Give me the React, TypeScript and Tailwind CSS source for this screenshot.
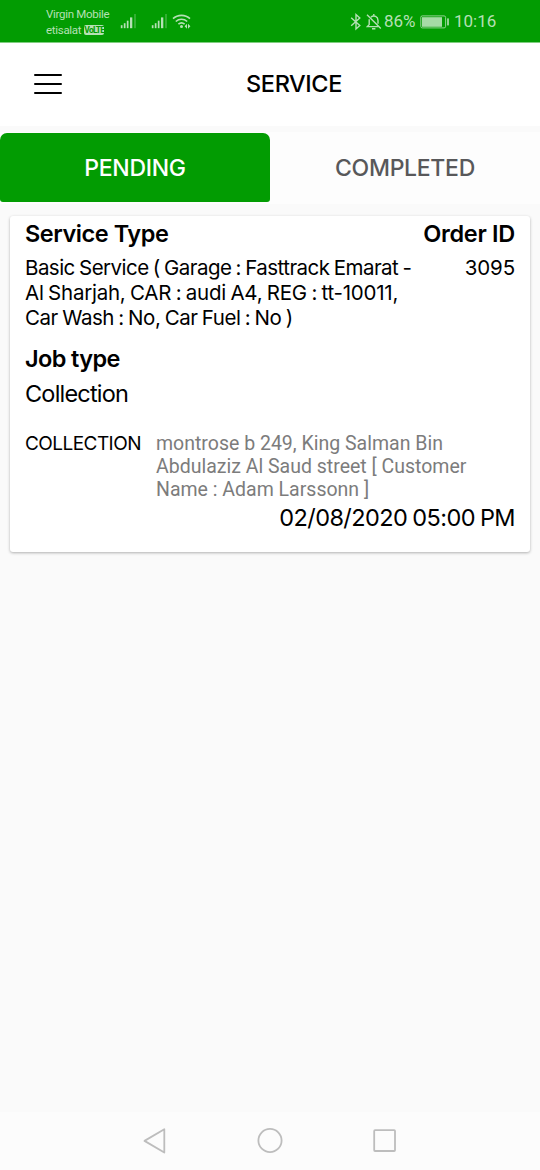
function SignalIcon() {
  return (
    <svg width="16" height="16" viewBox="0 0 16 16" fill="#b5e0b5">
      <rect x="0.8" y="12.2" width="1.7" height="3" />
      <rect x="3.8" y="10.2" width="1.7" height="5" />
      <rect x="6.8" y="7.7" width="1.7" height="7.5" />
      <rect x="10" y="4.4" width="2.3" height="10.8" />
      <rect x="14.2" y="1" width="1.6" height="14.2" opacity="0.35" />
    </svg>
  );
}

function WifiIcon() {
  return (
    <svg width="20" height="17" viewBox="0 0 20 17" fill="none" stroke="#b5e0b5" strokeWidth="1.6">
      <path d="M1 5.7c4.7-4.5 12.3-4.5 17 0" />
      <path d="M3.8 8.5c3.2-3 8.2-3 11.4 0" />
      <path d="M6.4 11.2c1.8-1.6 4.4-1.6 6.2 0" />
      <circle cx="9.5" cy="13.6" r="1.5" fill="#b5e0b5" stroke="none" />
      <path d="M15 10.8v5l-2.4-2.5zM16 10.8v5l2.4-2.5z" fill="#b5e0b5" stroke="none" />
    </svg>
  );
}

function BluetoothIcon() {
  return (
    <svg width="12" height="18" viewBox="0 0 12 18" fill="none" stroke="#b5e0b5" strokeWidth="1.4">
      <path d="M1.2 4.8l8.6 7.8L6 16V1.6l3.8 3.4-8.6 7.8" />
    </svg>
  );
}

function BellOffIcon() {
  return (
    <svg width="16" height="18" viewBox="0 0 16 18" fill="none" stroke="#b5e0b5" strokeWidth="1.4">
      <path d="M4.8 4.2C8 1.6 12 3.8 12 7.4v3.4M3.2 6.2v5.4L1.4 13.6h11" />
      <path d="M6 15.8h3.4M7.8 1v1.8M1 1.8l13.8 13.6" />
    </svg>
  );
}

function BatteryIcon() {
  return (
    <svg width="30" height="14" viewBox="0 0 30 14" fill="none">
      <rect x="0.8" y="0.9" width="24.8" height="12" rx="1.5" stroke="#b5e0b5" strokeWidth="1" opacity="0.8" />
      <rect x="2" y="2.2" width="20" height="9.6" fill="#a6dba6" />
      <rect x="27.2" y="3.4" width="1.6" height="7" fill="#b5e0b5" />
    </svg>
  );
}

function StatusBar() {
  return (
    <div className="flex h-[42px] items-start justify-between bg-[#029c02] font-[Roboto,sans-serif] text-[#b5e0b5]">
      <div className="flex pl-[46px]">
        <div className="w-[74px] pt-[6px] text-[11.5px] leading-[16px] tracking-[-0.3px]">
          <div className="whitespace-nowrap">Virgin Mobile</div>
          <div className="flex items-center gap-[3px]">
            etisalat
            <span className="flex h-[10px] w-[20px] items-center justify-center rounded-[2px] bg-[#b5e0b5] text-[8.5px] leading-none font-bold tracking-[-0.8px] text-[#029c02]">
              VoLTE
            </span>
          </div>
        </div>
        <div className="flex pt-[13px]">
          <SignalIcon />
          <div className="ml-[15px]">
            <SignalIcon />
          </div>
          <div className="ml-[5px]">
            <WifiIcon />
          </div>
        </div>
      </div>
      <div className="flex h-[43px] items-center pr-[44px] text-[17px]">
        <BluetoothIcon />
        <div className="ml-[4px]">
          <BellOffIcon />
        </div>
        <span className="ml-[2px] w-[32px] whitespace-nowrap">86%</span>
        <div className="ml-[4px]">
          <BatteryIcon />
        </div>
        <span className="ml-[4px] w-[42px] whitespace-nowrap">10:16</span>
      </div>
    </div>
  );
}

function Header() {
  return (
    <header className="flex h-[84px] items-center border-t border-[#80cd80] bg-white pr-[14px] pl-[34px]">
      <button className="flex w-7 flex-col gap-[7px] pb-[1px]" aria-label="Menu">
        <span className="h-[2px] w-full rounded-full bg-black" />
        <span className="h-[2px] w-full rounded-full bg-black" />
        <span className="h-[2px] w-full rounded-full bg-black" />
      </button>
      <h1 className="flex-1 pb-[2px] text-center text-[23.5px] font-medium tracking-[-0.4px]">SERVICE</h1>
    </header>
  );
}

function Tabs() {
  return (
    <div className="mt-[6px] flex h-[72px] items-start bg-[#fdfdfd] text-[23px] font-medium">
      <button className="mt-[1px] h-[69px] flex-1 rounded-t-[7px] rounded-b-[3px] bg-[#029c02] pt-[2px] tracking-[-0.3px] text-white">
        PENDING
      </button>
      <button className="mt-[1px] h-[69px] flex-1 pt-[2px] tracking-[-0.3px] text-[#58585a]">COMPLETED</button>
    </div>
  );
}

function ServiceCard() {
  return (
    <section className="mx-[10px] mt-[12px] h-[336px] rounded-[3px] bg-white px-[15px] pt-[3px] shadow-[0_1px_3px_rgba(0,0,0,0.3)]">
      <div className="flex justify-between text-[23.5px] leading-[30px] font-semibold tracking-[-0.45px]">
        <h2>Service Type</h2>
        <h2 className="tracking-[-0.3px]">Order ID</h2>
      </div>
      <div className="mt-[6px] flex justify-between text-[20.5px] leading-[25px] tracking-[-0.53px]">
        <p className="whitespace-nowrap [word-spacing:-1px]">
          Basic Service ( Garage : Fasttrack Emarat -
          <br />
          <span className="tracking-[-0.25px]">Al Sharjah, CAR : audi A4, REG : tt-10011,</span>
          <br />
          <span className="tracking-[-0.45px]">Car Wash : No, Car Fuel : No )</span>
        </p>
        <span className="tracking-[-0.1px]">3095</span>
      </div>
      <h2 className="mt-[14px] text-[23.5px] leading-[30px] font-semibold tracking-[-0.6px]">Job type</h2>
      <p className="mt-[5px] text-[23.5px] leading-[30px] tracking-[-0.8px]">Collection</p>
      <div className="mt-[23px] flex">
        <span className="w-[131px] text-[19px] leading-[23px] tracking-[-0.55px]">COLLECTION</span>
        <p className="font-[Roboto,sans-serif] text-[19.5px] leading-[23px] whitespace-nowrap text-[#7c7c7c]">
          montrose b 249, King Salman Bin
          <br />
          Abdulaziz Al Saud street [ Customer
          <br />
          Name : Adam Larssonn ]
        </p>
      </div>
      <p className="mt-[2px] text-right text-[23.5px] leading-[30px] tracking-[-0.58px] [word-spacing:-1px]">
        02/08/2020 05:00 PM
      </p>
    </section>
  );
}

function NavBar() {
  return (
    <nav className="flex h-[58px] items-center justify-center gap-[87px] bg-[#fcfcfc]">
      <svg width="28" height="28" viewBox="0 0 28 28" fill="none" stroke="#bdbdbd" strokeWidth="1.8" strokeLinejoin="round">
        <path d="M23.3 2.3v23.2L3.5 13.9z" />
      </svg>
      <svg width="28" height="28" viewBox="0 0 28 28" fill="none" stroke="#bdbdbd" strokeWidth="1.8">
        <circle cx="14" cy="13.5" r="11.6" />
      </svg>
      <svg width="28" height="28" viewBox="0 0 28 28" fill="none" stroke="#bdbdbd" strokeWidth="1.8">
        <rect x="3.2" y="3.2" width="20.8" height="20.8" rx="0.8" />
      </svg>
    </nav>
  );
}

export default function App() {
  return (
    <div className="flex h-[1170px] w-[540px] flex-col overflow-hidden bg-[#fafafa] font-[Inter,sans-serif] text-black">
      <StatusBar />
      <Header />
      <main className="flex-1">
        <Tabs />
        <ServiceCard />
      </main>
      <NavBar />
    </div>
  );
}
